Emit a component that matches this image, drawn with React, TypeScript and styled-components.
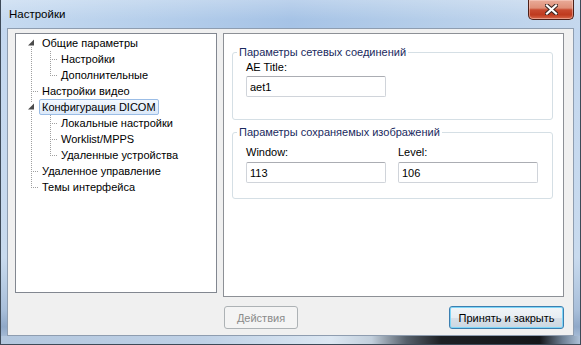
import React from "react";
import styled, { createGlobalStyle, css } from "styled-components";

const FONT = `"Liberation Sans", Arial, sans-serif`;

const GlobalStyle = createGlobalStyle`
  html, body { margin: 0; padding: 0; background: #ffffff; }
  body { font-family: ${FONT}; font-size: 11px; color: #000; }
  #root { width: 581px; height: 345px; }
  * { box-sizing: border-box; }
`;

const Window = styled.div`
  width: 581px;
  height: 345px;
  display: flex;
  flex-direction: column;
  border: 1px solid #3e4a58;
  border-top: none;
  background: linear-gradient(
    to bottom,
    #c3d7ef 0%,
    #c8daee 75%,
    #a9bfda 90%,
    #8fa8c8 95%,
    #b6c9df 100%
  );
`;

const TitleBar = styled.div`
  height: 28px;
  flex: none;
  display: flex;
  align-items: flex-start;
  justify-content: space-between;
  padding: 0 6px 0 8px;
  background:
    linear-gradient(to bottom, rgba(255, 255, 255, 0.25), rgba(255, 255, 255, 0) 70%),
    linear-gradient(to right, #c6daf0 0%, #b6cfeb 25%, #a6c3e6 50%, #b4cde9 72%, #c5d8ee 100%);
`;

const Title = styled.span`
  font-size: 11.5px;
  line-height: 28px;
  color: #000;
`;

const CloseButton = styled.div`
  width: 46px;
  height: 20px;
  display: flex;
  align-items: center;
  justify-content: center;
  border: 1px solid #4d2018;
  border-top: none;
  border-radius: 0 0 5px 5px;
  background: linear-gradient(
    to bottom,
    #e9ab99 0%,
    #df8f78 42%,
    #c84a30 52%,
    #bf3a1e 78%,
    #d8694b 100%
  );
  box-shadow: inset 0 0 0 1px rgba(255, 220, 210, 0.45);
`;

const Middle = styled.div`
  flex: 1;
  min-height: 0;
  display: flex;
  padding: 0 6px;
`;

const Client = styled.div`
  flex: 1;
  display: flex;
  align-items: flex-start;
  gap: 6px;
  padding: 4px 9px 6px 7px;
  background: #f0f0f0;
  border: 1px solid #8e9db0;
`;

const BottomFrame = styled.div`
  height: 8px;
  flex: none;
  background: linear-gradient(
    to right,
    #b3c7de 0%,
    #bfd1e6 35%,
    #dce7f2 57%,
    #c2cfdc 64%,
    #56606b 70%,
    #1d2024 76%,
    #141619 93%,
    #6d7f93 97%,
    #adc1d8 100%
  );
`;

/* ---------- tree ---------- */

const TreePanel = styled.div`
  width: 202px;
  height: 260px;
  flex: none;
  background: #ffffff;
  border: 1px solid #828790;
  padding-top: 1px;
`;

const TreeRow = styled.div`
  display: flex;
  height: 16px;
  padding-left: 6px;
`;

const NodeLabel = styled.span<{ $selected?: boolean }>`
  height: 16px;
  line-height: 14px;
  padding: 0 2px;
  border: 1px solid transparent;
  border-radius: 2px;
  white-space: nowrap;
  color: #000;
  ${(p) =>
    p.$selected &&
    css`
      border-color: #9bbde6;
      background: linear-gradient(to bottom, #f3f8fe, #dce9f9);
    `}
`;

const ConnectorSvg = styled.svg`
  flex: none;
  display: block;
`;

type ConnProps = {
  width: number;
  x: number;
  up?: boolean;
  down?: boolean;
  branch?: boolean;
  expander?: boolean;
};

const DOT = "#a0a0a0";

function Connector({ width, x, up, down, branch, expander }: ConnProps) {
  const lx = x + 0.5;
  return (
    <ConnectorSvg width={width} height={16} viewBox={`0 0 ${width} 16`} shapeRendering="crispEdges">
      {up && (
        <line x1={lx} y1={0} x2={lx} y2={expander ? 4 : 9} stroke={DOT} strokeDasharray="1 1" />
      )}
      {down && (
        <line x1={lx} y1={expander ? 12 : 8} x2={lx} y2={16} stroke={DOT} strokeDasharray="1 1" />
      )}
      {branch && !expander && (
        <line x1={x + 2} y1={8.5} x2={width} y2={8.5} stroke={DOT} strokeDasharray="1 1" />
      )}
      {expander && (
        <polygon points="12,4.5 12,10.5 6,10.5" fill="#4b4b4b" shapeRendering="geometricPrecision" />
      )}
    </ConnectorSvg>
  );
}

type Node = {
  label: string;
  level: 0 | 1;
  expander?: boolean;
  first?: boolean;
  last?: boolean;
  lastChild?: boolean;
  selected?: boolean;
};

const nodes: Node[] = [
  { label: "Общие параметры", level: 0, expander: true, first: true },
  { label: "Настройки", level: 1 },
  { label: "Дополнительные", level: 1, lastChild: true },
  { label: "Настройки видео", level: 0 },
  { label: "Конфигурация DICOM", level: 0, expander: true, selected: true },
  { label: "Локальные настройки", level: 1 },
  { label: "Worklist/MPPS", level: 1 },
  { label: "Удаленные устройства", level: 1, lastChild: true },
  { label: "Удаленное управление", level: 0 },
  { label: "Темы интерфейса", level: 0, last: true },
];

function TreeItem({ node }: { node: Node }) {
  return (
    <TreeRow>
      {node.level === 0 ? (
        <Connector width={17} x={9} up={!node.first} down={!node.last} branch expander={node.expander} />
      ) : (
        <>
          <Connector width={17} x={9} up down />
          <Connector width={19} x={11} up down={!node.lastChild} branch />
        </>
      )}
      <NodeLabel $selected={node.selected}>{node.label}</NodeLabel>
    </TreeRow>
  );
}

/* ---------- right side ---------- */

const RightColumn = styled.div`
  flex: 1;
  align-self: stretch;
  display: flex;
  flex-direction: column;
`;

const SettingsPanel = styled.div`
  flex: 1;
  background: #ffffff;
  border: 1px solid #8d9096;
  padding: 11px 10px 0 8px;
  display: flex;
  flex-direction: column;
  gap: 5px;
`;

const Group = styled.fieldset`
  margin: 0;
  min-width: 0;
  padding: 0;
  border: 1px solid #d5dfe5;
  border-radius: 3px;
`;

const GroupTitle = styled.legend`
  margin-left: 4px;
  padding: 0 2px;
  line-height: 14px;
  color: #1a2a5e;
`;

const GroupBody = styled.div<{ $pt: number; $pb: number }>`
  padding: ${(p) => p.$pt}px 13px ${(p) => p.$pb}px 13px;
`;

const FieldRow = styled.div`
  display: flex;
  gap: 12px;
`;

const Field = styled.div<{ $gap: number }>`
  display: flex;
  flex-direction: column;
  gap: ${(p) => p.$gap}px;
`;

const FieldLabel = styled.label`
  display: block;
  line-height: 14px;
  color: #000;
`;

const TextBox = styled.input`
  width: 140px;
  height: 21px;
  margin: 0;
  padding: 0 3px;
  font-family: ${FONT};
  font-size: 11px;
  color: #000;
  background: #fff;
  border: 1px solid #d0d4da;
  border-top-color: #abadb3;
  border-radius: 2px;
  outline: none;
`;

const ButtonRow = styled.div`
  display: flex;
  justify-content: space-between;
  margin-top: 9px;
  padding-left: 1px;
`;

const Button = styled.button<{ $w: number; $variant?: "default" | "disabled" }>`
  width: ${(p) => p.$w}px;
  height: 23px;
  margin: 0;
  padding: 0;
  font-family: ${FONT};
  font-size: 11px;
  color: #000;
  border: 1px solid #707070;
  border-radius: 3px;
  background: linear-gradient(to bottom, #f2f2f2 0%, #ebebeb 50%, #dddddd 51%, #cfcfcf 100%);
  ${(p) =>
    p.$variant === "disabled" &&
    css`
      color: #8a8a8a;
      border-color: #adb2b5;
      background: #f4f4f4;
    `}
  ${(p) =>
    p.$variant === "default" &&
    css`
      border-color: #3c7fb1;
      box-shadow: inset 0 0 0 1px #7fd6f7;
      background: linear-gradient(to bottom, #f1f5f8 0%, #e7edf2 50%, #d8e0e8 51%, #ccd7e1 100%);
    `}
`;

export default function App() {
  return (
    <>
      <GlobalStyle />
      <Window>
        <TitleBar>
          <Title>Настройки</Title>
          <CloseButton>
            <svg width="13" height="11" viewBox="0 0 13 11">
              <path d="M2 1.5 L11 9.5 M11 1.5 L2 9.5" stroke="#3a2420" strokeWidth="4.2" strokeLinecap="square" />
              <path d="M2 1.5 L11 9.5 M11 1.5 L2 9.5" stroke="#ffffff" strokeWidth="2.2" strokeLinecap="square" />
            </svg>
          </CloseButton>
        </TitleBar>
        <Middle>
          <Client>
            <TreePanel>
              {nodes.map((n) => (
                <TreeItem key={n.label} node={n} />
              ))}
            </TreePanel>
            <RightColumn>
              <SettingsPanel>
                <Group>
                  <GroupTitle>Параметры сетевых соединений</GroupTitle>
                  <GroupBody $pt={1} $pb={22}>
                    <Field $gap={2}>
                      <FieldLabel>AE Title:</FieldLabel>
                      <TextBox readOnly value="aet1" />
                    </Field>
                  </GroupBody>
                </Group>
                <Group>
                  <GroupTitle>Параметры сохраняемых изображений</GroupTitle>
                  <GroupBody $pt={6} $pb={15}>
                    <FieldRow>
                      <Field $gap={3}>
                        <FieldLabel>Window:</FieldLabel>
                        <TextBox readOnly value="113" />
                      </Field>
                      <Field $gap={3}>
                        <FieldLabel>Level:</FieldLabel>
                        <TextBox readOnly value="106" />
                      </Field>
                    </FieldRow>
                  </GroupBody>
                </Group>
              </SettingsPanel>
              <ButtonRow>
                <Button $w={74} $variant="disabled" disabled>
                  Действия
                </Button>
                <Button $w={115} $variant="default">
                  Принять и закрыть
                </Button>
              </ButtonRow>
            </RightColumn>
          </Client>
        </Middle>
        <BottomFrame />
      </Window>
    </>
  );
}
